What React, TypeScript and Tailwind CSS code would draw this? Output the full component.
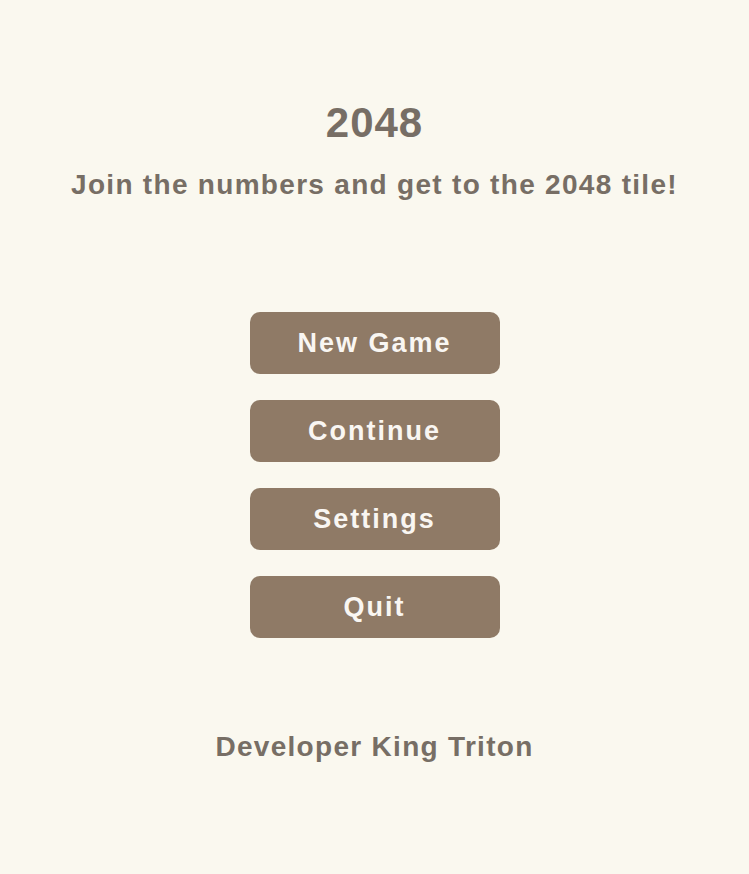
import React from "react";

const buttons = ["New Game", "Continue", "Settings", "Quit"];

export default function App() {
  return (
    <div
      className="min-h-[874px] w-full bg-[#faf8ef] flex flex-col items-center pt-[102px] text-[#776e65]"
      style={{ fontFamily: '"Liberation Sans", Arial, sans-serif' }}
    >
      <h1 className="text-[42px] leading-[42px] font-bold tracking-[1px]">2048</h1>
      <p className="mt-[27px] text-[28px] leading-[28px] font-bold tracking-[1.3px]">
        Join the numbers and get to the 2048 tile!
      </p>
      <div className="mt-[113px] flex flex-col gap-[26px]">
        {buttons.map((b) => (
          <button
            key={b}
            className="w-[250px] h-[62px] rounded-[10px] bg-[#8f7a66] text-[#f9f6f2] text-[27px] font-bold tracking-[2px] flex items-center justify-center"
          >
            {b}
          </button>
        ))}
      </div>
      <p className="mt-[95px] text-[28px] leading-[28px] font-bold tracking-[1.3px]">
        Developer King Triton
      </p>
    </div>
  );
}
